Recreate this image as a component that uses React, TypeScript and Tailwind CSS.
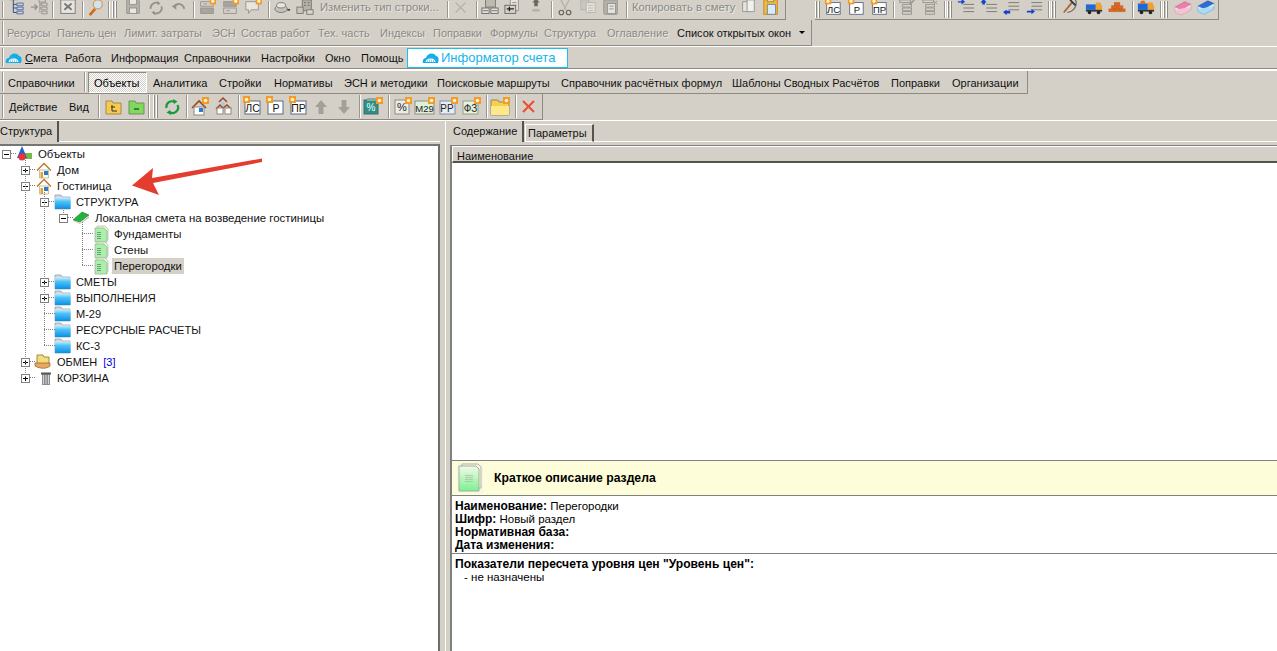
import React from "react";

const F = "font-['Liberation_Sans',Arial,sans-serif]";

const Badge = ({ x = 13, y = 0 }: { x?: number; y?: number }) => (
  <g>
    <rect x={x} y={y} width="7" height="7" fill="#f59a23" />
    <circle cx={x + 3.5} cy={y + 3.5} r="1.8" fill="#fff3d0" />
  </g>
);

const S = ({ children, w = 20, h = 20 }: { children?: React.ReactNode; w?: number; h?: number }) => (
  <svg width={w} height={h} viewBox={`0 0 ${w} ${h}`} className="block shrink-0 overflow-visible">
    {children}
  </svg>
);

const g1 = "#94928c";
const g2 = "#b5b2aa";

const Cloud = () => (
  <S w={17} h={14}>
    <path d="M1 12c-1-3 1-5 3-5 1-5 8-6 10-2 3 0 3 4 2 7z" fill="#14aee8" />
    <path d="M3.5 11c1-5 9-5 10 0z" fill="#fff" />
    <path d="M5 10h7M6.5 8h4" stroke="#14aee8" strokeDasharray="1 1" />
  </S>
);

const icons: Record<string, React.ReactNode> = {
  tree1: (
    <S>
      <rect x="3" y="-3" width="8" height="4" fill="#f5e86a" stroke="#b5a838" />
      <path d="M7 1v14M7 6h4M7 10h4M7 15h4" stroke="#24408a" fill="none" />
      <path d="M11 4.5h7v3h-7zM11 9h7v3h-7zM11 13.5h7v3h-7z" fill="#d4d0c8" stroke="#4a6aa8" />
    </S>
  ),
  tree2: (
    <S>
      <path d="M1 9h6M5 6l3 3-3 3" stroke={g1} fill="none" strokeWidth="1.6" />
      <path d="M11 1v14M11 6h2M11 10h2" stroke={g1} fill="none" />
      <path d="M10 0.5h7v3h-7zM13 4.5h6v3h-6zM13 9h6v3h-6zM13 13.5h6v3h-6z" fill="#d4d0c8" stroke={g1} />
    </S>
  ),
  excel: (
    <S>
      <rect x="2" y="1" width="16" height="15" fill="#e6e4df" stroke="#77756f" />
      <path d="M6 5l8 7M14 5l-8 7" stroke="#777" strokeWidth="2" />
    </S>
  ),
  mag: (
    <S>
      <path d="M3 18l6-7" stroke="#d06a1c" strokeWidth="3" />
      <circle cx="12" cy="6" r="5" fill="#cfe4f6" stroke="#d9a35a" strokeWidth="1.5" />
    </S>
  ),
  save: (
    <S>
      <path d="M3 0h12l2 2v14H3z" fill="#b5b2aa" stroke={g1} />
      <rect x="6" y="0" width="8" height="6" fill="#e8e6e1" stroke={g1} />
      <rect x="6" y="10" width="8" height="6" fill="#e8e6e1" stroke={g1} />
    </S>
  ),
  refresh: (
    <S>
      <path d="M4 11a6 6 0 0 1 9-6M16 8a6 6 0 0 1-9 7" fill="none" stroke={g1} strokeWidth="2" />
      <path d="M11 2l4 3-3 2zM9 18l-4-3 3-2z" fill={g1} />
    </S>
  ),
  undo: (
    <S>
      <path d="M5 8c4-4 9-3 11 3" fill="none" stroke={g1} strokeWidth="2" />
      <path d="M2 8l5-3v7z" fill={g1} />
    </S>
  ),
  ins1: (
    <S>
      <rect x="3" y="3" width="14" height="5" fill="#d4d0c8" stroke={g1} />
      <rect x="3" y="10" width="14" height="6" fill="#a8a59e" stroke={g1} />
      <path d="M6 5.5h4" stroke={g1} />
      <Badge x={13} y={-1} />
    </S>
  ),
  ins2: (
    <S>
      <rect x="3" y="3" width="14" height="5" fill="#a8a59e" stroke={g1} />
      <rect x="3" y="10" width="14" height="6" fill="#d4d0c8" stroke={g1} />
      <path d="M6 13h4" stroke={g1} />
      <Badge x={13} y={-1} />
    </S>
  ),
  note: (
    <S>
      <path d="M2 3h14v9H8l-3 4v-4H2z" fill="#e8e6e1" stroke={g1} />
      <Badge x={13} y={-1} />
    </S>
  ),
  hat: (
    <S>
      <ellipse cx="9" cy="11" rx="7" ry="4" fill="#c5c2bb" stroke="#77756f" />
      <ellipse cx="9" cy="7" rx="5" ry="3" fill="#e6e4df" stroke="#77756f" />
      <path d="M16 12h3" stroke="#444" strokeWidth="2" />
    </S>
  ),
  build: (
    <S>
      <rect x="7" y="1" width="10" height="12" fill="#b5b2aa" stroke="#77756f" />
      <rect x="1" y="9" width="7" height="7" fill="#c9c6bf" stroke="#77756f" />
      <rect x="12" y="12" width="7" height="5" fill="#d8d6d0" stroke="#77756f" />
      <path d="M9 4h2M13 4h2M9 7h2M13 7h2" stroke="#66645e" />
    </S>
  ),
  x: (
    <S>
      <path d="M4 4l11 11M15 4L4 15" stroke="#b3b0a8" strokeWidth="1.3" />
    </S>
  ),
  calc: (
    <S>
      <rect x="5" y="0" width="11" height="9" fill="#bcb9b1" stroke="#77756f" />
      <rect x="1" y="10" width="8" height="6" fill="#e6e4df" stroke="#666" />
      <rect x="11" y="10" width="8" height="6" fill="#e6e4df" stroke="#666" />
      <path d="M2 13h6M12 13h6" stroke="#666" />
    </S>
  ),
  docplus: (
    <S>
      <path d="M7 0h9v13H7z" fill="#e6e4df" stroke={g1} />
      <path d="M9 4h5M9 7h5" stroke={g1} />
      <rect x="1" y="7" width="12" height="9" fill="#d4d0c8" stroke="#66645e" />
      <path d="M3 11h8M6 8.5v5" stroke="#222" strokeWidth="1.5" />
    </S>
  ),
  move: (
    <S>
      <path d="M10 -1l4 5h-2v4H8V4H6z" fill="#6a6862" />
      <rect x="6" y="11" width="8" height="3" fill={g2} />
    </S>
  ),
  cut: (
    <S>
      <path d="M5 0l6 12M15 0L9 12" stroke={g2} strokeWidth="1.4" />
      <circle cx="6" cy="15" r="2.5" fill="none" stroke="#66645e" strokeWidth="1.3" />
      <circle cx="14" cy="15" r="2.5" fill="none" stroke="#66645e" strokeWidth="1.3" />
    </S>
  ),
  copy: (
    <S>
      <path d="M2 1h9v11H2z" fill="#c9c6bf" stroke={g2} />
      <path d="M8 4h10v11H8z" fill="#e6e4df" stroke={g2} />
      <path d="M10 7h6M10 10h6M10 13h6" stroke={g2} />
    </S>
  ),
  paste: (
    <S>
      <rect x="2" y="1" width="15" height="16" rx="1" fill="#b5b2aa" stroke={g1} />
      <rect x="6" y="5" width="9" height="11" fill="#e6e4df" stroke={g1} />
      <path d="M8 8h5M8 11h5" stroke={g1} />
    </S>
  ),
  copy2: (
    <S>
      <path d="M4 3h8v11H4z" fill="#e6e4df" stroke={g1} />
      <path d="M9 1h8v13H9z" fill="#f2f1ee" stroke={g1} />
    </S>
  ),
  pasteO: (
    <S>
      <rect x="2" y="1" width="15" height="16" fill="#f3b73c" stroke="#c58a1e" />
      <rect x="6" y="0" width="7" height="3" fill="#e8d9a8" stroke="#a88a3a" />
      <path d="M6 6h9v11H6z" fill="#dbeaf6" stroke="#6d88a0" />
    </S>
  ),
  ls: (
    <S>
      <rect x="3" y="4" width="15" height="13" fill="#fff" stroke="#5c6b80" />
      <text x="10.5" y="15" textAnchor="middle" fontSize="10.5" fill="#111" fontFamily="Liberation Sans">ЛС</text>
      <Badge x={1} y={-1} />
    </S>
  ),
  r: (
    <S>
      <rect x="3" y="4" width="15" height="13" fill="#fff" stroke="#5c6b80" />
      <text x="11" y="15" textAnchor="middle" fontSize="10.5" fill="#111" fontFamily="Liberation Sans">Р</text>
      <Badge x={1} y={-1} />
    </S>
  ),
  pr: (
    <S>
      <rect x="3" y="4" width="15" height="13" fill="#fff" stroke="#5c6b80" />
      <text x="10.5" y="15" textAnchor="middle" fontSize="10.5" fill="#111" fontFamily="Liberation Sans">ПР</text>
      <Badge x={1} y={-1} />
    </S>
  ),
  treeC1: (
    <S>
      <path d="M2 1h12v3H2zM5 6h10v3H5zM5 10h10v3H5zM5 14h10v3H5z" fill="#d4d0c8" stroke={g1} />
      <path d="M13 6l5-5" stroke={g1} strokeWidth="1.5" />
    </S>
  ),
  treeC2: (
    <S>
      <path d="M2 1h12v3H2zM5 6h10v3H5zM5 10h10v3H5zM5 14h10v3H5z" fill="#d4d0c8" stroke={g1} />
      <path d="M14 2l4 4M18 2l-4 4" stroke={g1} />
    </S>
  ),
  ind1: (
    <S>
      <path d="M7 6h12M7 10h12M7 14h12" stroke="#77756f" />
      <path d="M1 2.5h4V0l4 3-4 3V4H1z" fill="#1144cc" />
    </S>
  ),
  ind2: (
    <S>
      <path d="M7 6h12M7 10h12M7 14h12" stroke="#77756f" />
      <path d="M4 0l3.5 4H5.5v2h-3V4H.5z" fill="#1144cc" />
    </S>
  ),
  ind3: (
    <S>
      <path d="M6 4h12M6 8h12M6 12h12" stroke="#77756f" />
      <path d="M5 16h3v-3H4v-1L0 14.5 4 18v-2z" fill="#1144cc" />
    </S>
  ),
  ind4: (
    <S>
      <path d="M6 4h12M6 8h12M6 12h12" stroke="#77756f" />
      <path d="M1 13h5v-2l4 3-4 3v-2H1z" fill="#1144cc" />
    </S>
  ),
  hammer: (
    <S>
      <path d="M15 1c2 5 0 12-9 14" fill="none" stroke="#6a6a6a" strokeWidth="1.4" />
      <path d="M2 15L11 4" stroke="#b2642a" strokeWidth="2" />
      <path d="M9 1l6 6" stroke="#333" strokeWidth="2" />
    </S>
  ),
  truck: (
    <S>
      <rect x="1" y="6" width="11" height="6" fill="#1a6ad8" />
      <path d="M12 4h5l2 4v4h-7z" fill="#f0a030" />
      <rect x="1" y="12" width="18" height="2" fill="#333" />
      <circle cx="5" cy="15" r="2" fill="#222" />
      <circle cx="15" cy="15" r="2" fill="#222" />
    </S>
  ),
  bricks: (
    <S>
      <path d="M7 4h6v3H7zM4 7.5h6v3H4zM10.5 7.5h6v3h-6zM1 11h6v3H1zM7.5 11h6v3h-6zM14 11h5v3h-5z" fill="#e56a1a" stroke="#b84a10" strokeWidth=".6" />
    </S>
  ),
  truck2: (
    <S>
      <rect x="1" y="5" width="11" height="7" fill="#1a6ad8" />
      <path d="M3 5l2-3h3l2 3z" fill="#e56a1a" />
      <path d="M12 4h5l2 4v4h-7z" fill="#f0a030" />
      <rect x="1" y="12" width="18" height="2" fill="#333" />
      <circle cx="5" cy="15" r="2" fill="#222" />
      <circle cx="15" cy="15" r="2" fill="#222" />
    </S>
  ),
  book1: (
    <S>
      <path d="M1 9l11-6 7 3-11 6z" fill="#ee7fa8" stroke="#c75a86" strokeWidth=".6" />
      <path d="M1 9v3l7 3 11-6V6l-11 6z" fill="#f5f0ee" stroke="#d096aa" strokeWidth=".6" />
      <path d="M1 12v3l7 3 11-6V9" fill="#f3c4d4" stroke="#d096aa" strokeWidth=".6" />
    </S>
  ),
  book2: (
    <S>
      <path d="M1 8l11-6 7 3-11 6z" fill="#2f6bd8" stroke="#1e4aa8" strokeWidth=".6" />
      <path d="M1 8v3l7 3 11-6V5L8 11z" fill="#eef4fa" stroke="#7aa8d8" strokeWidth=".6" />
      <path d="M1 11v3l7 3 11-6V8" fill="#a9dcf5" stroke="#5aa8d8" strokeWidth=".6" />
    </S>
  ),
  folderUp: (
    <S>
      <path d="M3 4h6l1 2h8v11H3z" fill="#f9c94e" stroke="#a08a50" />
      <path d="M8 10h4M9 8v6h5" stroke="#333" fill="none" />
    </S>
  ),
  folderDn: (
    <S>
      <path d="M3 4h6l1 2h8v11H3z" fill="#7fd95a" stroke="#6f8f60" />
      <path d="M8 12h5" stroke="#234" strokeWidth="1.2" />
    </S>
  ),
  green: (
    <S>
      <path d="M4.5 11a5.5 5.5 0 0 1 8-6" fill="none" stroke="#189a3c" strokeWidth="2.2" />
      <path d="M15.5 8a5.5 5.5 0 0 1-8 7" fill="none" stroke="#189a3c" strokeWidth="2.2" />
      <path d="M11 2l4.5 2.5L12 7zM9 18l-4.5-2.5L8 13z" fill="#189a3c" />
    </S>
  ),
  house: (
    <S>
      <path d="M2 11l7-7 7 7" fill="none" stroke="#a0481c" strokeWidth="1.6" />
      <rect x="4" y="10" width="10" height="8" fill="#fff" stroke="#8a8a80" />
      <rect x="9" y="11" width="4" height="4" fill="#2b7ad0" />
      <Badge x={12} y={0} />
    </S>
  ),
  houses: (
    <S>
      <path d="M6 5l4-4 4 4M3 12l4-4 3 3M10 11l4-3 4 4" fill="none" stroke="#a0481c" strokeWidth="1.5" />
      <rect x="4" y="11" width="6" height="6" fill="#fff" stroke="#8a8a80" />
      <rect x="12" y="11" width="6" height="6" fill="#fff" stroke="#8a8a80" />
      <circle cx="10" cy="7" r="2" fill="#a8c8e8" />
    </S>
  ),
  up: (
    <S>
      <path d="M10 3l6 7h-3.5v7h-5v-7H4z" fill="#a3a097" />
    </S>
  ),
  down: (
    <S>
      <path d="M10 17l6-7h-3.5V3h-5v7H4z" fill="#a3a097" />
    </S>
  ),
  pct: (
    <S>
      <rect x="1" y="3" width="14" height="14" fill="#2f8f86" stroke="#3d6a66" />
      <rect x="4" y="1" width="14" height="3" fill="#8fa89e" />
      <text x="8" y="14" textAnchor="middle" fontSize="10" fill="#e8fff8" fontFamily="Liberation Sans">%</text>
      <Badge x={13} y={0} />
    </S>
  ),
  pct2: (
    <S>
      <rect x="3" y="3" width="14" height="14" fill="#ecebe6" stroke="#8f8d88" />
      <text x="10" y="14" textAnchor="middle" fontSize="11" fill="#222" fontFamily="Liberation Sans">%</text>
      <Badge x={13} y={0} />
    </S>
  ),
  m29: (
    <S w={22}>
      <rect x="1" y="4" width="19" height="13" fill="#dff0d8" stroke="#8f8d88" />
      <text x="10.5" y="15" textAnchor="middle" fontSize="9.5" fill="#222" fontFamily="Liberation Sans">М29</text>
      <Badge x={14} y={0} />
    </S>
  ),
  rr: (
    <S>
      <rect x="2" y="4" width="15" height="13" fill="#e6edf6" stroke="#7f8da0" />
      <text x="9" y="15" textAnchor="middle" fontSize="10" fill="#222" fontFamily="Liberation Sans">РР</text>
      <Badge x={13} y={0} />
    </S>
  ),
  fz: (
    <S>
      <rect x="2" y="4" width="15" height="13" fill="#e5f2de" stroke="#8f9d88" />
      <text x="9.5" y="15" textAnchor="middle" fontSize="10" fill="#222" fontFamily="Liberation Sans">ФЗ</text>
      <Badge x={13} y={0} />
    </S>
  ),
  folderNew: (
    <S>
      <path d="M1 3h7l1 2h10v13H1z" fill="#f9cf4a" stroke="#8f8a70" />
      <path d="M1 9h18v9H1z" fill="#fde98a" />
      <Badge x={13} y={0} />
    </S>
  ),
  del: (
    <S>
      <path d="M4 4l11 11M15 4L4 15" stroke="#ee4b32" strokeWidth="2" />
    </S>
  ),
};

const Ic = ({ n, w = 23 }: { n: string; w?: number }) => (
  <div className="h-full flex items-center justify-center shrink-0" style={{ width: w }}>
    {icons[n]}
  </div>
);

const Sep = ({ l = 0, r = 0 }: { l?: number; r?: number }) => (
  <div className="h-full shrink-0 py-[1px] flex" style={{ marginLeft: l, marginRight: r }}>
    <div className="w-[1px] bg-[#9a968e]" />
    <div className="w-[1px] bg-white" />
  </div>
);

const Grip = ({ l = 0, r = 0 }: { l?: number; r?: number }) => (
  <div className="h-full shrink-0 py-[1px] flex gap-[1px]" style={{ marginLeft: l, marginRight: r }}>
    <div className="w-[2px] bg-white border-r border-[#8d8a83]" />
    <div className="w-[2px] bg-white border-r border-[#8d8a83]" />
  </div>
);

const L = ({ w, children, dis, top }: { w: number; children: React.ReactNode; dis?: boolean; top?: boolean }) => (
  <div
    className={`shrink-0 whitespace-nowrap ${top ? "pb-[3px] text-[11.3px]" : "pt-[2px]"} ${dis ? "text-[#8c8a85] [text-shadow:1px_1px_0_#e9e7e2]" : "text-[#111]"}`}
    style={{ width: w }}
  >
    {children}
  </div>
);

type RowT = { depth: number; box?: "+" | "-"; icon: string; label: React.ReactNode; sel?: boolean };

const TreeIcon = ({ t }: { t: string }) => {
  if (t === "root")
    return (
      <S w={18} h={16}>
        <rect x="9" y="7" width="8" height="6" fill="#7ab648" />
        <path d="M7 0l5 12H2z" fill="#2a5fc8" />
        <circle cx="7" cy="11" r="3.5" fill="#e33" />
      </S>
    );
  if (t === "home")
    return (
      <S w={16} h={16}>
        <path d="M1 8.5l7-7 7 7" fill="none" stroke="#b9762e" strokeWidth="1.3" />
        <path d="M3.5 8h9v8h-9z" fill="#fffce8" stroke="#b5a27a" strokeWidth=".7" />
        <rect x="8" y="9" width="4" height="4" fill="#2b7ad0" />
        <rect x="4.5" y="10" width="2.5" height="6" fill="#e0a040" />
      </S>
    );
  if (t === "folder")
    return (
      <S w={17} h={16}>
        <defs>
          <linearGradient id="fb" x1="0" y1="0" x2="0" y2="1">
            <stop offset="0" stopColor="#c8eefd" />
            <stop offset=".35" stopColor="#4fc2f6" />
            <stop offset="1" stopColor="#0a8fe8" />
          </linearGradient>
        </defs>
        <path d="M1 1h6l1 2h8v12H1z" fill="#d0d8de" stroke="#8a9aa8" strokeWidth=".7" />
        <rect x="1" y="3.5" width="15.5" height="11.5" fill="url(#fb)" />
      </S>
    );
  if (t === "book")
    return (
      <S w={18} h={14}>
        <path d="M1 9l9-8 7 3-9 7z" fill="#25b23c" stroke="#157a28" strokeWidth=".6" />
        <path d="M1 9l7 3 9-7v2l-9 6-7-3z" fill="#c9c6bf" />
      </S>
    );
  if (t === "doc")
    return (
      <S w={15} h={16}>
        <path d="M3 0h8l3 3v11H3z" fill="#f5f3d8" stroke="#b5b2a0" strokeWidth=".7" />
        <path d="M1 2h9l3 3v11H1z" fill="#a6f2aa" stroke="#a0a8a0" strokeWidth=".7" />
        <path d="M3 6.5h4M3 8.5h4M3 10.5h4M3 12.5h4" stroke="#6f7f74" strokeWidth=".8" />
      </S>
    );
  if (t === "share")
    return (
      <S w={18} h={16}>
        <path d="M3 1h6l1 2h5v8H3z" fill="#f5dc7a" stroke="#a08a40" />
        <path d="M1 9h15v3c-3 3-10 3-15 0z" fill="#e8a860" stroke="#8a6030" strokeWidth=".7" />
      </S>
    );
  return (
    <S w={12} h={15}>
      <rect x="2" y="3" width="8" height="11" fill="#8a8c90" />
      <path d="M3.5 4v9M6 4v9M8.5 4v9" stroke="#d4d4d4" />
      <rect x="1" y="1.5" width="10" height="2" fill="#55575a" />
    </S>
  );
};

const Box = ({ k }: { k: string }) => (
  <div className="w-[9px] h-[9px] bg-white border border-[#808080] relative shrink-0">
    <div className="absolute left-[1px] top-[3px] w-[5px] h-[1px] bg-black" />
    {k === "+" && <div className="absolute left-[3px] top-[1px] w-[1px] h-[5px] bg-black" />}
  </div>
);

const rows: RowT[] = [
  { depth: 0, box: "-", icon: "root", label: "Объекты" },
  { depth: 1, box: "+", icon: "home", label: "Дом" },
  { depth: 1, box: "-", icon: "home", label: "Гостиница" },
  { depth: 2, box: "-", icon: "folder", label: "СТРУКТУРА" },
  { depth: 3, box: "-", icon: "book", label: "Локальная смета на возведение гостиницы" },
  { depth: 4, icon: "doc", label: "Фундаменты" },
  { depth: 4, icon: "doc", label: "Стены" },
  { depth: 4, icon: "doc", label: "Перегородки", sel: true },
  { depth: 2, box: "+", icon: "folder", label: "СМЕТЫ" },
  { depth: 2, box: "+", icon: "folder", label: "ВЫПОЛНЕНИЯ" },
  { depth: 2, icon: "folder", label: "М-29" },
  { depth: 2, icon: "folder", label: "РЕСУРСНЫЕ РАСЧЕТЫ" },
  { depth: 2, icon: "folder", label: "КС-3" },
  {
    depth: 1,
    box: "+",
    icon: "share",
    label: (
      <>
        ОБМЕН <span className="text-[#0000e0] ml-[3px]">[3]</span>
      </>
    ),
  },
  { depth: 1, box: "+", icon: "trash", label: "КОРЗИНА" },
];

const TreeRow = ({ r }: { r: RowT }) => {
  const upper = typeof r.label !== "string" || r.label === r.label.toUpperCase();
  return (
    <div className="h-4 flex items-center relative" style={{ paddingLeft: r.depth * 19 + 2 }}>
      <div className="w-[9px] shrink-0">{r.box && <Box k={r.box} />}</div>
      <div className="w-[27px] h-4 shrink-0 flex items-center justify-end pr-[5px]">
        <TreeIcon t={r.icon} />
      </div>
      <span
        className={`px-[2px] -ml-[2px] leading-4 whitespace-nowrap ${upper ? "text-[11px]" : "text-[11.4px]"} ${
          r.sel ? "bg-[#d4d0c8]" : ""
        }`}
      >
        {r.label}
      </span>
    </div>
  );
};

export default function App() {
  return (
    <div className={`${F} relative w-[1277px] h-[651px] overflow-hidden bg-[#d4d0c8] text-[11px] leading-none text-black`}>
      {/* row 1 */}
      <div className="h-[20px] flex items-start overflow-hidden [&_svg]:w-[18px] [&_svg]:h-[18px] [&_svg]:-translate-y-[2px]">
        <div className="h-[20px] w-[786px] shrink-0 flex items-center border-r border-b border-[#8d8a83] pl-[2px]">
          <Sep />
          <Ic n="tree1" />
          <Ic n="tree2" />
          <Sep l={2} r={2} />
          <Ic n="excel" />
          <Sep l={3} />
          <Ic n="mag" />
          <Sep l={1} />
          <Grip l={2} r={4} />
          <Ic n="save" />
          <Ic n="refresh" />
          <Ic n="undo" />
          <Sep l={3} />
          <Ic n="ins1" />
          <Ic n="ins2" />
          <Ic n="note" />
          <Sep l={4} />
          <Ic n="hat" />
          <Ic n="build" />
          <div className="w-[4px] shrink-0" />
          <L w={127} dis top>Изменить тип строки...</L>
          <Sep />
          <Ic n="x" />
          <Sep l={4} />
          <Ic n="calc" />
          <Ic n="docplus" />
          <Ic n="move" />
          <Sep l={4} />
          <Ic n="cut" />
          <Ic n="copy" />
          <Ic n="paste" />
          <Sep l={4} />
          <div className="w-[4px] shrink-0" />
          <L w={104} dis top>Копировать в смету</L>
          <Ic n="copy2" />
          <Ic n="pasteO" />
        </div>
        <div className="w-[29px] shrink-0" />
        <div className="h-[20px] flex items-center border-r border-b border-[#8d8a83] w-[404px] shrink-0">
          <Grip r={1} />
          <Ic n="ls" />
          <Ic n="r" />
          <Ic n="pr" />
          <Sep l={3} />
          <Ic n="treeC1" />
          <Ic n="treeC2" />
          <Sep l={3} />
          <Grip l={1} r={2} />
          <Ic n="ind1" />
          <Ic n="ind2" />
          <Ic n="ind3" />
          <Ic n="ind4" />
          <Sep l={2} />
          <Grip l={1} r={3} />
          <Ic n="hammer" />
          <Ic n="truck" />
          <Ic n="bricks" />
          <Sep l={4} />
          <Ic n="truck2" />
          <Sep l={3} />
          <Grip l={1} r={3} />
          <Ic n="book1" />
          <Ic n="book2" />
        </div>
      </div>

      {/* row 2 */}
      <div className="h-[27px] border-b border-white">
        <div className="h-[26px] w-[812px] flex items-center border-r border-b border-[#8d8a83] pl-[2px]">
          <Sep />
          <div className="w-[3px] shrink-0" />
          <L w={50} dis>Ресурсы</L>
          <L w={67} dis>Панель цен</L>
          <L w={88} dis>Лимит. затраты</L>
          <L w={29} dis>ЭСН</L>
          <L w={77} dis>Состав работ</L>
          <L w={62} dis>Тех. часть</L>
          <L w={53} dis>Индексы</L>
          <L w={57} dis>Поправки</L>
          <L w={54} dis>Формулы</L>
          <L w={63} dis>Структура</L>
          <L w={70} dis>Оглавление</L>
          <L w={122}>Список открытых окон</L>
          <div className="w-0 h-0 border-x-[3px] border-x-transparent border-t-[3px] border-t-black" />
        </div>
      </div>

      {/* row 3 */}
      <div className="h-[24px] border-b-2 border-b-white">
        <div className="h-[22px] border-b border-[#8d8a83] flex items-center pl-[2px]">
          <Sep />
          <div className="w-[21px] shrink-0 pl-[1px]">
            <Cloud />
          </div>
          <L w={40}>
            <span className="underline">С</span>мета
          </L>
          <L w={46}>Работа</L>
          <L w={73}>Информация</L>
          <L w={77}>Справочники</L>
          <L w={64}>Настройки</L>
          <L w={36}>Окно</L>
          <L w={46}>Помощь</L>
          <div className="w-[161px] h-[20px] shrink-0 bg-white border border-[#17c0f0] flex items-center gap-[2px] pl-[14px] text-[13px] text-[#13b5ea]">
            <Cloud />
            <span className="whitespace-nowrap">Информатор счета</span>
          </div>
        </div>
      </div>

      {/* row 4 */}
      <div className="h-[23px]">
        <div className="h-[23px] w-[1028px] flex items-center border-r border-b border-[#8d8a83] pl-[2px]">
          <Sep />
          <div className="w-[4px] shrink-0" />
          <L w={76}>Справочники</L>
          <Sep />
          <div className="w-[2px] shrink-0" />
          <div className="w-[59px] h-[21px] shrink-0 bg-[repeating-conic-gradient(#ffffff_0_25%,#d4d0c8_0_50%)] bg-[length:2px_2px] border border-t-[#8d8a83] border-l-[#8d8a83] border-r-white border-b-white flex items-center pl-[5px] pt-[2px] mr-[6px]">Объекты</div>
          <L w={66}>Аналитика</L>
          <L w={55}>Стройки</L>
          <L w={70}>Нормативы</L>
          <L w={93}>ЭСН и методики</L>
          <L w={124}>Поисковые маршруты</L>
          <L w={171}>Справочник расчётных формул</L>
          <L w={159}>Шаблоны Сводных Расчётов</L>
          <L w={61}>Поправки</L>
          <L w={70}>Организации</L>
        </div>
      </div>

      {/* row 5 */}
      <div className="h-[27px] border-b border-white">
        <div className="h-[26px] w-[543px] flex items-center border-r border-b border-[#8d8a83] pl-[2px]">
          <Sep />
          <div className="w-[5px] shrink-0" />
          <L w={60}>Действие</L>
          <L w={29}>Вид</L>
          <Sep r={1} />
          <Ic n="folderUp" />
          <Ic n="folderDn" />
          <Sep l={1} />
          <Grip l={3} r={2} />
          <Ic n="green" />
          <Sep l={3} />
          <Ic n="house" />
          <Ic n="houses" />
          <Sep l={4} />
          <Ic n="ls" />
          <Ic n="r" />
          <Ic n="pr" />
          <Ic n="up" />
          <Ic n="down" />
          <Sep l={4} />
          <Ic n="pct" />
          <Sep l={4} />
          <Ic n="pct2" />
          <Ic n="m29" />
          <Ic n="rr" />
          <Ic n="fz" />
          <Sep l={4} />
          <Ic n="folderNew" />
          <Sep l={4} />
          <Ic n="del" />
        </div>
      </div>

      {/* main */}
      <div className="h-[530px] flex">
        {/* left */}
        <div className="w-[440px] shrink-0 flex flex-col">
          <div className="h-[23px] flex shrink-0">
            <div className="w-[59px] h-[21px] border-r-2 border-[#55534e] flex items-center text-[#111]">Структура</div>
            <div className="flex-1 h-[21px] border-b border-white" />
          </div>
          <div className="flex-1 bg-white border-t-2 border-[#777570] border-r-2 border-r-[#6f6d68] relative text-[#111]">
            <div>
              {rows.map((r, i) => (
                <TreeRow key={i} r={r} />
              ))}
            </div>
            <svg className="absolute left-0 top-[-146px] pointer-events-none" width="120" height="400" fill="none" stroke="#808080" strokeDasharray="1 1">
              <path d="M11 153.5h5M25.5 158v220M30 169.5h6M30 185.5h6M30 361.5h6M30 377.5h6M44.5 190v156M49 201.5h6M49 281.5h6M49 297.5h6M44 313.5h11M44 329.5h11M44 345.5h11M63.5 206v7M68 217.5h6M82.5 222v44M82 233.5h11M82 249.5h11M82 265.5h11" />
            </svg>
          </div>
        </div>
        {/* splitter */}
        <div className="w-[5px] shrink-0" />
        {/* right */}
        <div className="flex-1 min-w-0 flex flex-col border-l border-white relative">
          <div className="h-[21px] flex shrink-0 items-end">
            <div className="w-[78px] h-[21px] pl-[7px] flex items-center text-[#111] border-r-2 border-[#55534e]">Содержание</div>
            <div className="w-[69px] h-[18px] ml-[1px] pl-[2px] pt-[1px] flex items-center text-[#111] border-t border-l border-white border-r-2 border-r-[#55534e] border-b border-b-white">Параметры</div>
            <div className="flex-1 border-b border-white" />
          </div>
          <div className="flex-1 pl-[4px] pt-[3px] flex flex-col">
            <div className="flex-1 flex flex-col border-l-2 border-[#808080] border-t border-t-[#808080]">
              <div className="h-[17px] shrink-0 border-t border-l border-white border-b-2 border-b-[#55534e] pl-[4px] pt-[5px] flex items-center text-[#111] bg-[#d4d0c8]">Наименование</div>
              <div className="h-[297px] bg-white shrink-0" />
              <div className="h-[36px] shrink-0 bg-[#fdfdd9] border-t border-[#808080] border-b flex items-center pl-[5px]">
                <svg width="26" height="30" viewBox="0 0 26 30" className="block shrink-0">
                  <defs>
                    <linearGradient id="dg" x1="0" y1="0" x2="0" y2="1">
                      <stop offset="0" stopColor="#f4fbe8" />
                      <stop offset="1" stopColor="#7cf090" />
                    </linearGradient>
                  </defs>
                  <rect width="26" height="30" fill="#f6f6e4" />
                  <path d="M5 1h16l3 3v21H5z" fill="#f8f8e6" stroke="#b5b3a0" />
                  <path d="M2 3h17l3 3v22H2z" fill="url(#dg)" stroke="#a4ae9e" />
                  <path d="M8 12.5h8M8 14.5h8M8 16.5h8M8 18.5h8" stroke="#a8c0a8" strokeWidth=".8" />
                </svg>
                <b className="ml-[11px] text-[12.2px] whitespace-nowrap">Краткое описание раздела</b>
              </div>
              <div className="bg-white flex-1 flex flex-col text-[11.5px]">
                <div className="h-[58px] shrink-0 border-b border-[#808080] pl-[3px] pt-[4px] leading-[13px]">
                  <div><b className="text-[12px]">Наименование:</b> Перегородки</div>
                  <div><b className="text-[12px]">Шифр:</b> Новый раздел</div>
                  <div><b className="text-[12px]">Нормативная база:</b></div>
                  <div><b className="text-[12px]">Дата изменения:</b></div>
                </div>
                <div className="pl-[3px] pt-[4px] leading-[13px]">
                  <div><b className="text-[12.1px]">Показатели пересчета уровня цен "Уровень цен":</b></div>
                  <div className="pl-[9px]">- не назначены</div>
                </div>
              </div>
            </div>
          </div>
        </div>
      </div>

      {/* annotation arrow */}
      <svg className="absolute left-0 top-0 pointer-events-none" width="300" height="220">
        <path d="M132 185.5 L153 168 L152 178 L262 158.5 L262 162 L153 183 L159 195 Z" fill="#e53c30" />
      </svg>
    </div>
  );
}
